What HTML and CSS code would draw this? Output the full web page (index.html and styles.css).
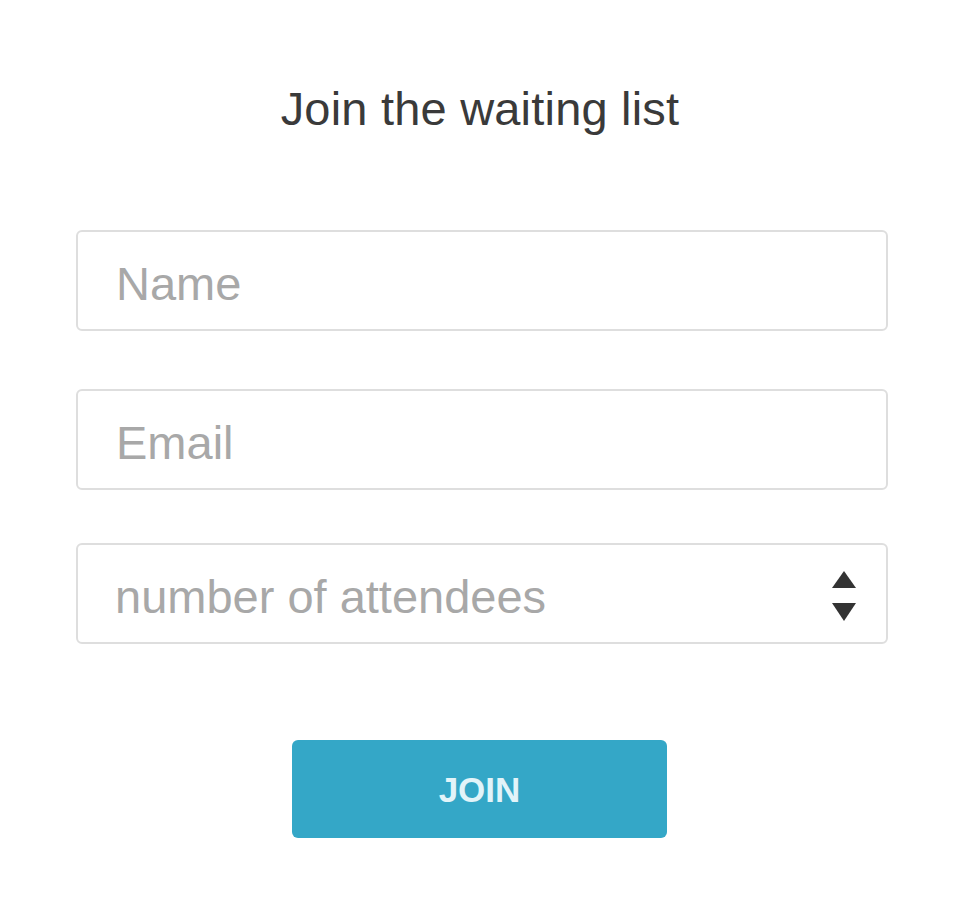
FILE: index.html
```html
<!DOCTYPE html>
<html lang="en">
<head>
<meta charset="utf-8">
<title>Join the waiting list</title>
<link rel="stylesheet" href="styles.css">
</head>
<body>
<main class="page">
  <h1 class="title">Join the waiting list</h1>
  <form class="form">
    <input class="field" type="text" placeholder="Name">
    <input class="field field-email" type="email" placeholder="Email">
    <div class="select-wrap">
      <select class="field select">
        <option>number of attendees</option>
      </select>
      <svg class="arrows" width="24" height="50" viewBox="0 0 24 50" aria-hidden="true">
        <polygon points="12,0 24,17 0,17" fill="#333"/>
        <polygon points="0,32 24,32 12,50" fill="#333"/>
      </svg>
    </div>
    <div class="actions">
      <button class="btn" type="button">JOIN</button>
    </div>
  </form>
</main>
</body>
</html>
```
FILE: styles.css
```css
html, body {
  margin: 0;
  padding: 0;
  background: #fff;
}

body {
  font-family: "Liberation Sans", Arial, sans-serif;
}

.page {
  display: flex;
  flex-direction: column;
  padding: 0 72px 0 76px;
}

.title {
  margin: 85px 0 0;
  padding-right: 4px;
  font-size: 47px;
  line-height: 47px;
  font-weight: normal;
  color: #3a3a3a;
  text-align: center;
  letter-spacing: 0.2px;
}

.form {
  display: flex;
  flex-direction: column;
  margin-top: 98px;
}

.field {
  box-sizing: border-box;
  width: 812px;
  height: 101px;
  margin: 0;
  padding: 6px 38px 0;
  border: 2px solid #dedede;
  border-radius: 6px;
  background: #fff;
  font-family: "Liberation Sans", Arial, sans-serif;
  font-size: 47px;
  color: #333;
  outline: none;
}

.field::placeholder {
  color: #a8a8a8;
  opacity: 1;
}

.field-email {
  margin-top: 58px;
}

.select-wrap {
  position: relative;
  margin-top: 53px;
  width: 812px;
}

.select {
  -webkit-appearance: none;
  appearance: none;
  display: block;
  color: #a8a8a8;
  padding-left: 37px;
}

.arrows {
  position: absolute;
  right: 32px;
  top: 28px;
  pointer-events: none;
}

.actions {
  display: flex;
  justify-content: center;
  margin-top: 96px;
  width: 812px;
}

.btn {
  width: 375px;
  height: 98px;
  margin-left: -5px;
  border: none;
  border-radius: 6px;
  background: #34a7c7;
  color: #e2f4f9;
  font-family: "Liberation Sans", Arial, sans-serif;
  font-size: 35px;
  font-weight: bold;
  padding-top: 3px;
}
```
